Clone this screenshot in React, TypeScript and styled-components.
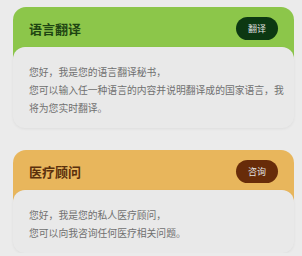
import React from 'react';
import styled, { createGlobalStyle } from 'styled-components';

const GlobalStyle = createGlobalStyle`
  body {
    margin: 0;
    background: #ebebeb;
    font-family: "Noto Sans CJK SC", "Noto Sans", sans-serif;
  }
`;

type Theme = {
  header: string;
  title: string;
  button: string;
};

const themes: Record<string, Theme> = {
  green: { header: '#8cc64a', title: '#1e4512', button: '#0c3812' },
  orange: { header: '#e8b65c', title: '#5a300c', button: '#682c09' },
};

const cards = [
  {
    title: '语言翻译',
    action: '翻译',
    theme: themes.green,
    lines: [
      '您好，我是您的语言翻译秘书，',
      '您可以输入任一种语言的内容并说明翻译成的国家语言，我将为您实时翻译。',
    ],
  },
  {
    title: '医疗顾问',
    action: '咨询',
    theme: themes.orange,
    lines: ['您好，我是您的私人医疗顾问，', '您可以向我咨询任何医疗相关问题。'],
  },
];

const App: React.FC = () => {
  return (
    <>
      <GlobalStyle />
      <DivPage>
        {cards.map((card) => (
          <DivCard key={card.title}>
            <DivHeader $bg={card.theme.header}>
              <DivTitle $color={card.theme.title}>{card.title}</DivTitle>
              <Button $bg={card.theme.button}>{card.action}</Button>
            </DivHeader>
            <DivBody>
              {card.lines.map((line) => (
                <P key={line}>{line}</P>
              ))}
            </DivBody>
          </DivCard>
        ))}
      </DivPage>
    </>
  );
};

const DivPage = styled.div`
  padding: 7px 8px 0 13px;
  display: flex;
  flex-direction: column;
  gap: 22px;
`;

const DivCard = styled.div`
  width: 281px;
  display: flex;
  flex-direction: column;
`;

const DivHeader = styled.div<{ $bg: string }>`
  background: ${(p) => p.$bg};
  border-radius: 13px 13px 0 0;
  height: 40px;
  padding: 0 16px 12px 16px;
  display: flex;
  align-items: center;
  justify-content: space-between;
`;

const DivTitle = styled.div<{ $color: string }>`
  color: ${(p) => p.$color};
  font-size: 13px;
  font-weight: 700;
  padding-top: 2px;
`;

const Button = styled.div<{ $bg: string }>`
  background: ${(p) => p.$bg};
  color: #e0e0e0;
  font-size: 9px;
  width: 42px;
  height: 23px;
  border-radius: 12px;
  display: flex;
  align-items: center;
  justify-content: center;
  margin-top: 2px;
`;

const DivBody = styled.div`
  margin-top: -12px;
  background: #e9e9e9;
  border-radius: 12px;
  padding: 16px 8px 11px 16px;
  box-shadow: 0 1px 3px rgba(0, 0, 0, 0.06);
`;

const P = styled.div`
  color: #707070;
  font-size: 9.8px;
  line-height: 18px;
`;

export default App;
